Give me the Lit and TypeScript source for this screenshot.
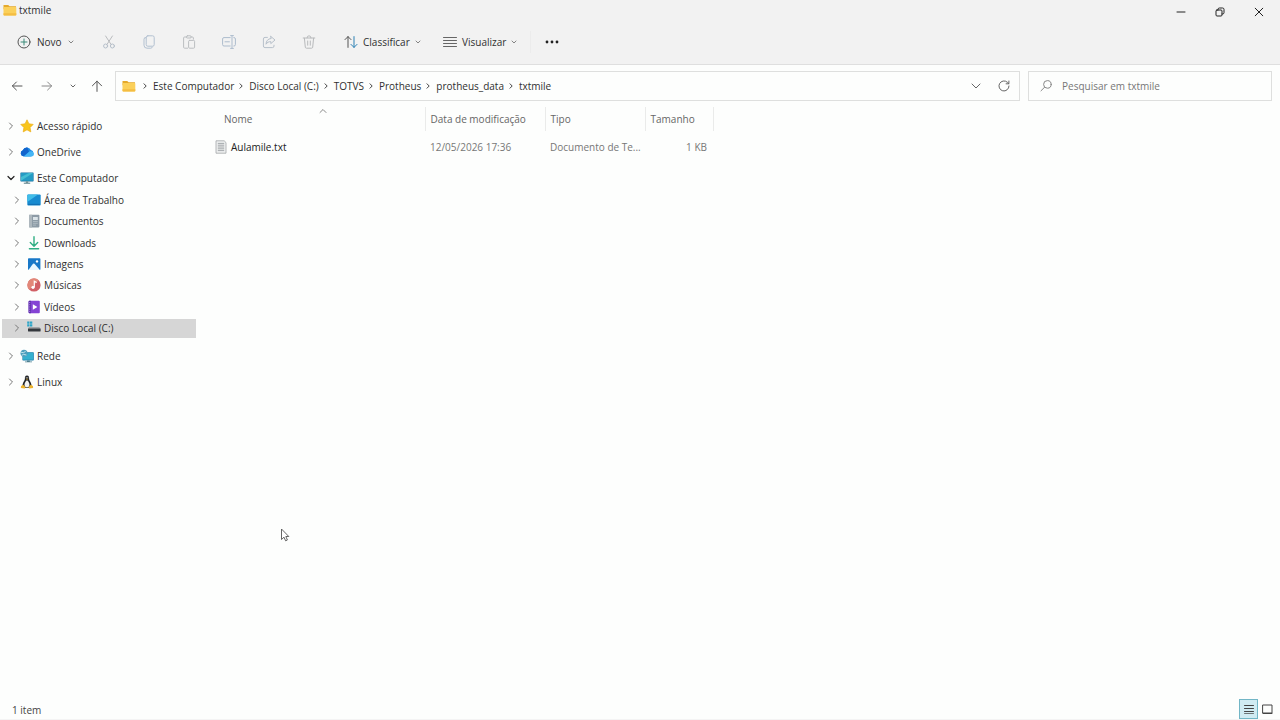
import { LitElement, html, css, svg, TemplateResult } from "lit";
import { customElement, state } from "lit/decorators.js";
import { classMap } from "lit/directives/class-map.js";

const folder = html`<svg width="14" height="12" viewBox="0 0 14 12" aria-hidden="true">
  <path d="M.5 1h4.7l1.4 1.3H13v3H.5z" fill="#e5a92b" />
  <rect x=".5" y="2.9" width="12.8" height="8.6" rx=".8" fill="#fbd05a" />
  <path d="M.5 9.2h12.8v1.5a.8.8 0 0 1-.8.8H1.3a.8.8 0 0 1-.8-.8z" fill="#f4bd42" />
</svg>`;

const line = (size: number, body: TemplateResult, color = "currentColor", width = 1) => html`<svg
  width=${size} height=${size} viewBox="0 0 ${size} ${size}" fill="none" stroke=${color}
  stroke-width=${width} stroke-linecap="round" stroke-linejoin="round" aria-hidden="true">${body}</svg>`;

const chevronRight = line(8, svg`<path d="M2.5 1 5.5 4 2.5 7" />`);
const chevronSmall = line(8, svg`<path d="M3 1.8 5.2 4 3 6.2" />`, "#444");
const chevronDown = line(8, svg`<path d="M1 2.5 4 5.5 7 2.5" />`, "#222", 1.2);
const chevronTiny = line(6, svg`<path d="M1 2 3 4 5 2" />`, "#777", 0.9);

const tools: { label: string; icon: TemplateResult }[] = [
  {
    label: "Recortar",
    icon: line(14, svg`<path d="M3.6 1 9 9.4M10.4 1 5 9.4" stroke="#b9bbbe" /><circle cx="3.6" cy="11" r="2" /><circle cx="10.4" cy="11" r="2" />`, "#b5bfca"),
  },
  {
    label: "Copiar",
    icon: line(14, svg`<rect x="4.2" y=".8" width="8" height="10.4" rx="1.6" /><path d="M4.2 2.6A1.7 1.7 0 0 0 2 4.2v6A3 3 0 0 0 5 13.2h3.8a1.7 1.7 0 0 0 1.6-1.2" />`, "#b3c1d1"),
  },
  {
    label: "Colar",
    icon: line(14, svg`<path d="M4.4 2H2.6a1 1 0 0 0-1 1v9.2a1 1 0 0 0 1 1h3M9 2h1.4a1 1 0 0 1 1 1v1.2" /><rect x="4.4" y=".8" width="4.8" height="2.2" rx="1" /><rect x="6.6" y="5.4" width="6" height="7.8" rx="1" />`, "#bbbec1"),
  },
  {
    label: "Renomear",
    icon: line(14, svg`<path d="M8.2 2.6H2A1.4 1.4 0 0 0 .6 4v5.6A1.4 1.4 0 0 0 2 11h6.2M11.8 2.6H12A1.4 1.4 0 0 1 13.4 4v5.6A1.4 1.4 0 0 1 12 11h-.2M10 .8v12.4M8.6.6h2.8M8.6 13.4h2.8M3 6.8h4.4" />`, "#adbccd"),
  },
  {
    label: "Compartilhar",
    icon: line(14, svg`<path d="M5.4 2.4H3A1.6 1.6 0 0 0 1.4 4v7A1.6 1.6 0 0 0 3 12.6h7.4A1.6 1.6 0 0 0 12 11v-.8" /><path d="M8.8 1.4 13 5 8.8 8.6V6.6C6.6 6.6 5.2 7.4 4 9.2 4.2 6 5.8 3.8 8.8 3.5z" />`, "#b7c0ca"),
  },
  {
    label: "Excluir",
    icon: line(14, svg`<path d="M1.2 3h11.6M5 2.8a2 2 0 0 1 4 0M2.4 3.2l.9 9a1.2 1.2 0 0 0 1.2 1h5a1.2 1.2 0 0 0 1.2-1l.9-9M5.7 6v4.2M8.3 6v4.2" />`, "#b8babc"),
  },
];

const pic = (body: TemplateResult) => html`<svg width="14" height="14" viewBox="0 0 14 14" aria-hidden="true">${body}</svg>`;

const icons = {
  star: pic(svg`<path d="M7 .8 8.9 4.8 13.2 5.4 10.1 8.5 10.8 12.9 7 10.8 3.2 12.9 3.9 8.5.8 5.4 5.1 4.8z" fill="#f8c51c" stroke="#edae18" stroke-width=".7" stroke-linejoin="round" />`),
  cloud: pic(svg`<path d="M3.6 11.4A3.2 3.2 0 0 1 2.8 5.2 4.4 4.4 0 0 1 10.9 5 3.3 3.3 0 0 1 11 11.4z" fill="#1c8ae6" /><path d="M2.8 5.2A4.4 4.4 0 0 1 7.5 2.5L9 7 3.4 11.3A3.2 3.2 0 0 1 2.8 5.2z" fill="#1264cc" /><path d="M4 11.4 9.3 6.6A3.2 3.2 0 0 1 14 9a2.4 2.4 0 0 1-2.6 2.4z" fill="#45b5f5" />`),
  monitor: pic(svg`<rect x=".4" y="1.4" width="13.2" height="9" rx=".6" fill="#1870a0" /><rect x="1" y="2" width="12" height="7.8" fill="#249bc4" /><path d="M1 9.8V6L9 2h4z" fill="#43bdd2" /><path d="M5.8 10.4h2.4v1.4H5.8z" fill="#688" /><path d="M3.8 11.7h6.4v1H3.8z" fill="#527985" />`),
  desktop: pic(svg`<rect x=".3" y="1.6" width="13.4" height="10.8" rx="1" fill="#188bd0" /><path d="M.3 9V2.6a1 1 0 0 1 1-1H11z" fill="#40bde8" /><path d="M1.2 10.9h11.6v.8H1.2z" fill="#1266a8" />`),
  document: pic(svg`<rect x="2" y=".8" width="10.4" height="12.6" rx=".8" fill="#8d9ba6" /><rect x="2" y=".8" width="3" height="12.6" fill="#adb7bd" /><path d="M6 3h4.8v3H6z" fill="#dbe4e8" /><path d="M6 7.5h4.8M6 9.3h4.8M6 11.1h3" stroke="#b6c1c8" stroke-width=".8" />`),
  download: pic(svg`<path d="M7 .8V10M3.3 6.6 7 10.2l3.7-3.6M2.4 12.8h9.2" fill="none" stroke="#2fae83" stroke-width="1.4" stroke-linecap="round" stroke-linejoin="round" />`),
  image: pic(svg`<rect x="1" y="1.2" width="12.4" height="11.8" rx=".8" fill="#1878c8" /><path d="M1.4 13 6 6.8q.7-.8 1.5 0l5.4 6.2z" fill="#e8f7ff" /><circle cx="10" cy="4.4" r="1.2" fill="#fff" />`),
  music: pic(svg`<circle cx="7" cy="7" r="6.6" fill="#d16066" /><path d="M2.3 11.7A6.6 6.6 0 0 1 11.7 2.3z" fill="#e28778" /><path d="M7.3 9.2V3.2l2.4 1.3" fill="none" stroke="#fff" stroke-width="1.2" /><circle cx="6" cy="9.3" r="1.6" fill="#fff" />`),
  video: pic(svg`<rect x="1.6" y=".8" width="11.2" height="12.4" rx="1" fill="#8443d4" /><path d="M1.6 1.8a1 1 0 0 1 1-1h1.2v12.4H2.6a1 1 0 0 1-1-1z" fill="#5a2ba6" /><path d="M2.7 2v10.5" stroke="#b593ea" stroke-width=".9" stroke-dasharray="1.1 1.1" /><path d="M5.8 4.2 10.4 7l-4.6 2.8z" fill="#fff" />`),
  disk: pic(svg`<path d="M.2.4h2.3v2.3H.2zM3 .4h2.3v2.3H3zM.2 3.2h2.3v2.3H.2zM3 3.2h2.3v2.3H3z" fill="#2ba5c8" /><path d="M2 6.3h10.4L13.4 7.6H1z" fill="#909499" /><rect x="1" y="7.4" width="12.6" height="3" rx=".3" fill="#34383d" />`),
  network: pic(svg`<rect x="2.4" y="3.2" width="11.4" height="8.2" rx=".6" fill="#1b7da8" /><path d="M3 10.8V6.4l6-2.6h4.2v7z" fill="#35b0cf" /><path d="M7 11.4h2.8v1H12v.8H5v-.8h2z" fill="#4c7f8f" /><circle cx="4" cy="4.2" r="3.5" fill="#4f9fbd" /><path d="M1 3.2q2.4 1.4 4.6-.8M1.6 6.4Q3 4.6 6.4 6" fill="none" stroke="#cdeaf2" stroke-width=".9" />`),
  linux: pic(svg`<path d="M7 .4C5.2.4 4.7 1.8 4.9 3.8 5 5.3 3 7 2.6 9.4c-.2 1.6.5 3.3 1.8 3.6h5.2c1.4-.3 2-2 1.8-3.6C11 7 9 5.3 9.1 3.8 9.3 1.8 8.8.4 7 .4z" fill="#202326" /><path d="M7 5.2C5.6 6 4.5 8 4.5 9.8S5.6 12.4 7 12.4s2.5-.8 2.5-2.6S8.4 6 7 5.2z" fill="#f4f4f2" /><path d="M6 3.7h2L7 5z" fill="#edb42e" /><path d="M1 11l2.3-1.2 2.5 2.6-1.2 1.2L.9 13zM13 11l-2.3-1.2-2.5 2.6 1.2 1.2 3.7-.6z" fill="#edb42e" /><circle cx="6.2" cy="2.8" r=".5" fill="#fff" /><circle cx="7.8" cy="2.8" r=".5" fill="#fff" />`),
};

interface Place {
  name: string;
  icon: TemplateResult;
  children?: Place[];
}

const places: Place[] = [
  { name: "Acesso rápido", icon: icons.star },
  { name: "OneDrive", icon: icons.cloud },
  {
    name: "Este Computador",
    icon: icons.monitor,
    children: [
      { name: "Área de Trabalho", icon: icons.desktop },
      { name: "Documentos", icon: icons.document },
      { name: "Downloads", icon: icons.download },
      { name: "Imagens", icon: icons.image },
      { name: "Músicas", icon: icons.music },
      { name: "Vídeos", icon: icons.video },
      { name: "Disco Local (C:)", icon: icons.disk },
    ],
  },
  { name: "Rede", icon: icons.network },
  { name: "Linux", icon: icons.linux },
];

const path = ["Este Computador", "Disco Local (C:)", "TOTVS", "Protheus", "protheus_data", "txtmile"];
const files = [{ name: "Aulamile.txt", date: "12/05/2026 17:36", type: "Documento de Texto", typeShort: "Documento de Te...", size: "1 KB" }];

@customElement("app-root")
export class AppRoot extends LitElement {
  @state() private selected = "Disco Local (C:)";

  static styles = css`
    :host {
      display: flex;
      flex-direction: column;
      min-height: 100vh;
      box-sizing: border-box;
      background: #fdfefd;
      color: #303030;
      font: 10px/16px "Open Sans", "Noto Sans", sans-serif;
    }
    * { box-sizing: border-box; }
    svg { display: block; flex: none; }
    button, input { font: inherit; color: inherit; background: none; border: 0; padding: 0; margin: 0; }
    button { display: flex; align-items: center; }
    ul, ol { list-style: none; margin: 0; padding: 0; }
    .top { background: #f2f2f2; border-bottom: 1px solid #dfdfdf; }
    .title { display: flex; height: 24px; justify-content: space-between; }
    .name { display: flex; gap: 2px; height: 20px; padding-left: 3px; align-items: center; margin: 0; font-size: 10px; font-weight: 400; }
    .window { display: flex; padding-right: 2px; }
    .window button { width: 39px; justify-content: center; color: #222; }
    .tools { display: flex; align-items: center; height: 40px; padding: 0 16px 4px; }
    .command { gap: 6px; height: 28px; }
    .new { width: 73px; padding-left: 1px; }
    .tool { width: 40px; height: 28px; justify-content: center; }
    .sort { margin-left: 15px; width: 99px; }
    .view { width: 87px; }
    .command.sort, .command.view { gap: 5px; }
    .rule { width: 1px; height: 22px; background: #ececec; }
    .more { width: 42px; height: 28px; justify-content: center; }
    .nav { display: flex; align-items: center; height: 42px; padding: 0 8px 0 2px; }
    .nav .step { width: 30px; height: 28px; justify-content: center; color: #555; }
    .nav .recent { width: 21px; color: #666; }
    .nav .up { width: 28px; }
    .nav .next { color: #888; }
    .address { flex: 1; display: flex; align-items: center; height: 30px; margin-left: 4px; border: 1px solid #dedfde; padding: 0 1px 0 6px; }
    .crumbs { display: flex; flex: 1; padding-left: 2px; }
    .crumbs li { display: flex; align-items: center; }
    .crumbs svg { margin: 0 4px 0 3px; }
    .crumbs a { color: inherit; text-decoration: none; }
    .address button { width: 28px; height: 28px; justify-content: center; color: #666; }
    .search { display: flex; align-items: center; gap: 9px; width: 244px; height: 30px; margin-left: 8px; border: 1px solid #dedfde; padding: 0 10px; color: #888; }
    .search input { flex: 1; min-width: 0; outline: 0; }
    .search input::placeholder { color: #777; opacity: 1; }
    .body { flex: 1; display: flex; }
    .places { width: 197px; padding: 9px 1px 0 2px; }
    .tree { display: grid; gap: 7px; }
    .sub { display: grid; grid-auto-rows: 1fr; height: 150px; align-items: center; margin-top: 2px; }
    .place { width: 100%; height: 19px; gap: 3px; padding-left: 5px; color: #303030; }
    .place .arrow { width: 10px; color: #777; }
    .sub .place { padding-left: 11px; }
    .sub .place .arrow { margin-right: 1px; }
    .chosen { background: #d6d6d6; }
    .files { flex: 1; padding-left: 15px; }
    table { table-layout: fixed; width: 501px; border-collapse: collapse; }
    .c-name { width: 213px; }
    .c-date { width: 120px; }
    .c-type { width: 100px; }
    .c-size { width: 68px; }
    th { height: 24px; padding: 0 0 0 5px; text-align: left; font-weight: 400; color: #666; border-right: 1px solid #eaebea; white-space: nowrap; }
    th:first-child { padding-left: 12px; }
    .head { display: flex; align-items: center; }
    .asc { margin: 0 98px 16px auto; color: #888; }
    td { height: 32px; padding: 0 0 0 5px; color: #777; white-space: nowrap; }
    td:first-child { padding-left: 2px; }
    .file { display: flex; align-items: center; gap: 3px; color: #222; }
    td.size { text-align: right; padding-right: 6px; }
    .status { display: flex; justify-content: space-between; height: 22px; padding: 0 4px 0 12px; color: #444; border-bottom: 1px solid #f4f4f4; }
    .status p { margin: 0; line-height: 24px; }
    .modes { display: flex; align-items: center; padding-top: 1px; }
    .modes button { width: 18px; height: 20px; justify-content: center; color: #444; }
    .modes .on { width: 19px; background: #d0ebf2; border: 1px solid #72b6c6; }
    .pointer { position: absolute; left: 280px; top: 528px; pointer-events: none; }
  `;

  private place(p: Place): TemplateResult {
    return html`<li>
      <button class=${classMap({ place: true, chosen: this.selected === p.name })} @click=${() => (this.selected = p.name)}>
        <span class="arrow">${p.children ? chevronDown : chevronRight}</span>
        ${p.icon}<span>${p.name}</span>
      </button>
      ${p.children ? html`<ul class="sub">${p.children.map((c) => this.place(c))}</ul>` : ""}
    </li>`;
  }

  render() {
    return html`
      <header class="top">
        <div class="title">
          <h1 class="name">${folder}<span>txtmile</span></h1>
          <div class="window">
            <button aria-label="Minimizar">${line(10, svg`<path d="M1 5h8" />`)}</button>
            <button aria-label="Restaurar">${line(10, svg`<rect x="1" y="3" width="6" height="6" rx="1" /><path d="M3 3V2.4A1.4 1.4 0 0 1 4.4 1H7.6A1.4 1.4 0 0 1 9 2.4V5.6A1.4 1.4 0 0 1 7.6 7H7" />`)}</button>
            <button aria-label="Fechar">${line(10, svg`<path d="M1.2 1.2 8.8 8.8M8.8 1.2 1.2 8.8" />`)}</button>
          </div>
        </div>
        <div class="tools">
          <button class="command new">
            ${line(14, svg`<circle cx="7" cy="7" r="6" stroke="#555" /><path d="M7 4v6M4 7h6" stroke="#3b8a78" />`)}
            <span>Novo</span>${chevronTiny}
          </button>
          ${tools.map((t) => html`<button class="tool" aria-label=${t.label}>${t.icon}</button>`)}
          <button class="command sort">
            ${line(14, svg`<path d="M4 12.4V1.6M1 4.6l3-3 3 3" stroke="#555" /><path d="M10 1.6v10.8M7 9.4l3 3 3-3" stroke="#2a80b4" />`)}
            <span>Classificar</span>${chevronTiny}
          </button>
          <button class="command view">
            ${line(14, svg`<path d="M.5 2.5h13M.5 5.5h13M.5 8.5h13M.5 11.5h13" />`, "#666")}
            <span>Visualizar</span>${chevronTiny}
          </button>
          <span class="rule"></span>
          <button class="more" aria-label="Ver mais">
            <svg width="14" height="4" viewBox="0 0 14 4" fill="#222" aria-hidden="true"><circle cx="2" cy="2" r="1.4" /><circle cx="7" cy="2" r="1.4" /><circle cx="12" cy="2" r="1.4" /></svg>
          </button>
        </div>
      </header>
      <nav class="nav" aria-label="Navegação">
        <button class="step" aria-label="Voltar">${line(12, svg`<path d="M11 6H1.4M5.4 2 1.4 6l4 4" />`)}</button>
        <button class="step next" aria-label="Avançar">${line(12, svg`<path d="M1 6h9.6M6.6 2l4 4-4 4" />`)}</button>
        <button class="step recent" aria-label="Locais recentes">${line(6, svg`<path d="M1 2 3 4 5 2" />`)}</button>
        <button class="step up" aria-label="Acima">${line(12, svg`<path d="M6 11.4V1.2M1.4 5.8 6 1.2l4.6 4.6" />`)}</button>
        <div class="address">
          ${folder}
          <ol class="crumbs">${path.map((p) => html`<li>${chevronSmall}<a href="#">${p}</a></li>`)}</ol>
          <button aria-label="Locais anteriores">${line(10, svg`<path d="M1 3 5 7 9 3" />`)}</button>
          <button aria-label="Atualizar">${line(12, svg`<path d="M11 6A5 5 0 1 1 9.4 2.3L10.8 3.6M10.9 1v2.8H8.1" />`)}</button>
        </div>
        <label class="search">
          ${line(14, svg`<circle cx="8.4" cy="5.4" r="3.8" /><path d="M5.6 8.2 2 11.8" />`)}
          <input type="search" aria-label="Pesquisar" placeholder="Pesquisar em txtmile" />
        </label>
      </nav>
      <div class="body">
        <aside class="places"><ul class="tree">${places.map((p) => this.place(p))}</ul></aside>
        <main class="files">
          <table>
            <colgroup><col class="c-name" /><col class="c-date" /><col class="c-type" /><col class="c-size" /></colgroup>
            <thead><tr>
              <th aria-sort="ascending"><div class="head">Nome<span class="asc">${line(8, svg`<path d="M1 5.5 4 2.5 7 5.5" />`)}</span></div></th>
              <th>Data de modificação</th><th>Tipo</th><th>Tamanho</th>
            </tr></thead>
            <tbody>${files.map((f) => html`<tr>
              <td><span class="file">${pic(svg`<path d="M2 .8h8.2l1.8 1.8v10.6H2z" fill="#eef0f0" stroke="#a2a6a8" stroke-width=".8" /><path d="M3.8 3.4h6.4M3.8 5.2h6.4M3.8 7h6.4M3.8 8.8h6.4M3.8 10.6h6.4" stroke="#92979a" stroke-width=".8" />`)}${f.name}</span></td>
              <td>${f.date}</td><td title=${f.type}>${f.typeShort}</td><td class="size">${f.size}</td>
            </tr>`)}</tbody>
          </table>
        </main>
      </div>
      <footer class="status">
        <p>1 item</p>
        <div class="modes">
          <button class="on" aria-label="Detalhes">${line(10, svg`<path d="M.5 1.5h9M.5 4.5h9M.5 7.5h9M.5 9.8h9" />`)}</button>
          <button aria-label="Miniaturas">${line(11, svg`<rect x="1" y="1" width="9" height="8" /><path d="M1 9.5h9" />`)}</button>
        </div>
      </footer>
      <svg class="pointer" width="10" height="14" viewBox="0 0 10 14" aria-hidden="true"><path d="M1.5 1v10.5L4 9.2l1.6 3.6 1.8-.8L5.8 8.5h3z" fill="#fff" stroke="#555" stroke-width=".9" stroke-linejoin="round" /></svg>
    `;
  }
}
